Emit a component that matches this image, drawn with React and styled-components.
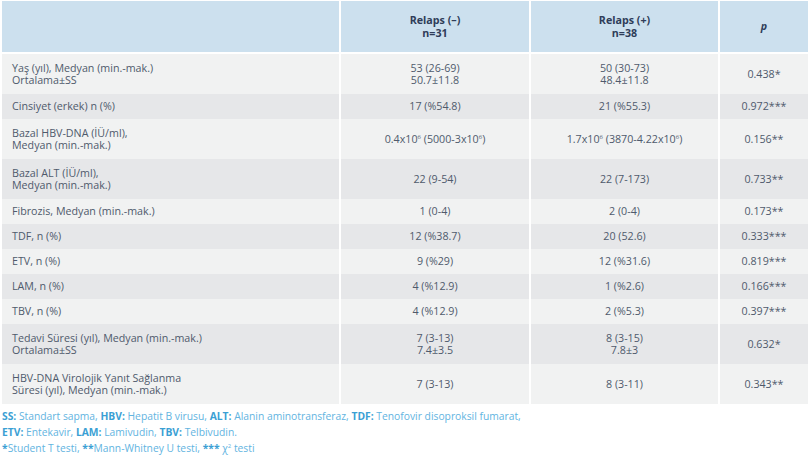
import React from "react";
import styled, { createGlobalStyle } from "styled-components";

const rows = [
  { label: ["Yaş (yıl), Medyan (min.-mak.)", "Ortalama±SS"], a: ["53 (26-69)", "50.7±11.8"], b: ["50 (30-73)", "48.4±11.8"], p: "0.438*", tall: true },
  { label: ["Cinsiyet (erkek) n (%)"], a: ["17 (%54.8)"], b: ["21 (%55.3)"], p: "0.972***" },
  { label: ["Bazal HBV-DNA (İÜ/ml),", "Medyan (min.-mak.)"], a: "hbvA", b: "hbvB", p: "0.156**", tall: true },
  { label: ["Bazal ALT (İÜ/ml),", "Medyan (min.-mak.)"], a: ["22 (9-54)"], b: ["22 (7-173)"], p: "0.733**", tall: true },
  { label: ["Fibrozis, Medyan (min.-mak.)"], a: ["1 (0-4)"], b: ["2 (0-4)"], p: "0.173**" },
  { label: ["TDF, n (%)"], a: ["12 (%38.7)"], b: ["20 (52.6)"], p: "0.333***" },
  { label: ["ETV, n (%)"], a: ["9 (%29)"], b: ["12 (%31.6)"], p: "0.819***" },
  { label: ["LAM, n (%)"], a: ["4 (%12.9)"], b: ["1 (%2.6)"], p: "0.166***" },
  { label: ["TBV, n (%)"], a: ["4 (%12.9)"], b: ["2 (%5.3)"], p: "0.397***" },
  { label: ["Tedavi Süresi (yıl), Medyan (min.-mak.)", "Ortalama±SS"], a: ["7 (3-13)", "7.4±3.5"], b: ["8 (3-15)", "7.8±3"], p: "0.632*", tall: true },
  { label: ["HBV-DNA Virolojik Yanıt Sağlanma", "Süresi (yıl), Medyan (min.-mak.)"], a: ["7 (3-13)"], b: ["8 (3-11)"], p: "0.343**", tall: true },
];

const Lines = ({ items }) =>
  items.map((t, i) => (
    <React.Fragment key={i}>
      {i > 0 && <br />}
      {t}
    </React.Fragment>
  ));

const renderValue = (v) => {
  if (v === "hbvA")
    return (
      <>
        0.4x10<Sup>6</Sup> (5000-3x10<Sup>6</Sup>)
      </>
    );
  if (v === "hbvB")
    return (
      <>
        1.7x10<Sup>6</Sup> (3870-4.22x10<Sup>6</Sup>)
      </>
    );
  return <Lines items={v} />;
};

export default function App() {
  return (
    <>
      <GlobalStyle />
      <Page>
        <Table>
          <colgroup>
            <col style={{ width: 337 }} />
            <col style={{ width: 190 }} />
            <col style={{ width: 189 }} />
            <col style={{ width: 90 }} />
          </colgroup>
          <thead>
            <tr>
              <Th />
              <Th>Relaps (–)<br />n=31</Th>
              <Th>Relaps (+)<br />n=38</Th>
              <Th><em>p</em></Th>
            </tr>
          </thead>
          <tbody>
            {rows.map((r, i) => (
              <Row key={i} $alt={i % 2 === 1} $tall={r.tall}>
                <Label><Lines items={r.label} /></Label>
                <Cell>{renderValue(r.a)}</Cell>
                <Cell>{renderValue(r.b)}</Cell>
                <Cell>{r.p}</Cell>
              </Row>
            ))}
          </tbody>
        </Table>
        <Notes>
          <Abbr>SS:</Abbr> Standart sapma, <Abbr>HBV:</Abbr> Hepatit B virusu, <Abbr>ALT:</Abbr> Alanin aminotransferaz, <Abbr>TDF:</Abbr> Tenofovir disoproksil fumarat,
          <br />
          <Abbr>ETV:</Abbr> Entekavir, <Abbr>LAM:</Abbr> Lamivudin, <Abbr>TBV:</Abbr> Telbivudin.
          <br />
          <Abbr>*</Abbr>Student T testi, <Abbr>**</Abbr>Mann-Whitney U testi, <Abbr>***</Abbr> χ<Sup>2</Sup> testi
        </Notes>
      </Page>
    </>
  );
}

const GlobalStyle = createGlobalStyle`
  body {
    margin: 0;
    background: #ffffff;
    font-family: "Open Sans", "Liberation Sans", sans-serif;
  }
`;

const Page = styled.div`
  width: 810px;
  padding: 1px 2px 0 2px;
  box-sizing: border-box;
`;

const Table = styled.table`
  width: 806px;
  table-layout: fixed;
  border-collapse: separate;
  border-spacing: 0;
  font-size: 10.7px;
  color: #4f5a6c;
`;

const Th = styled.th`
  background: #cce0ee;
  height: 53px;
  padding: 0 10px;
  font-weight: 700;
  line-height: 12.5px;
  color: #2f3d59;
  text-align: center;
  vertical-align: middle;
  border-bottom: 2px solid #ffffff;
  border-left: 2px solid #ffffff;
  box-sizing: border-box;

  &:first-child {
    border-left: none;
  }

  em {
    font-style: italic;
  }
`;

const Row = styled.tr`
  background: ${({ $alt }) => ($alt ? "#e6e7e9" : "#f1f2f2")};
  height: ${({ $tall }) => ($tall ? "40px" : "25px")};
`;

const Cell = styled.td`
  padding: 0 10px;
  line-height: 12.5px;
  text-align: center;
  vertical-align: middle;
  border-left: 2px solid #ffffff;
  box-sizing: border-box;
`;

const Label = styled(Cell)`
  text-align: left;
  border-left: none;
`;

const Sup = styled.sup`
  font-size: 6px;
  line-height: 0;
  vertical-align: 4px;
`;

const Notes = styled.div`
  margin-top: 4px;
  font-size: 10.3px;
  line-height: 16px;
  color: #62b4df;
`;

const Abbr = styled.b`
  font-weight: 700;
  color: #3b9fd4;
`;
